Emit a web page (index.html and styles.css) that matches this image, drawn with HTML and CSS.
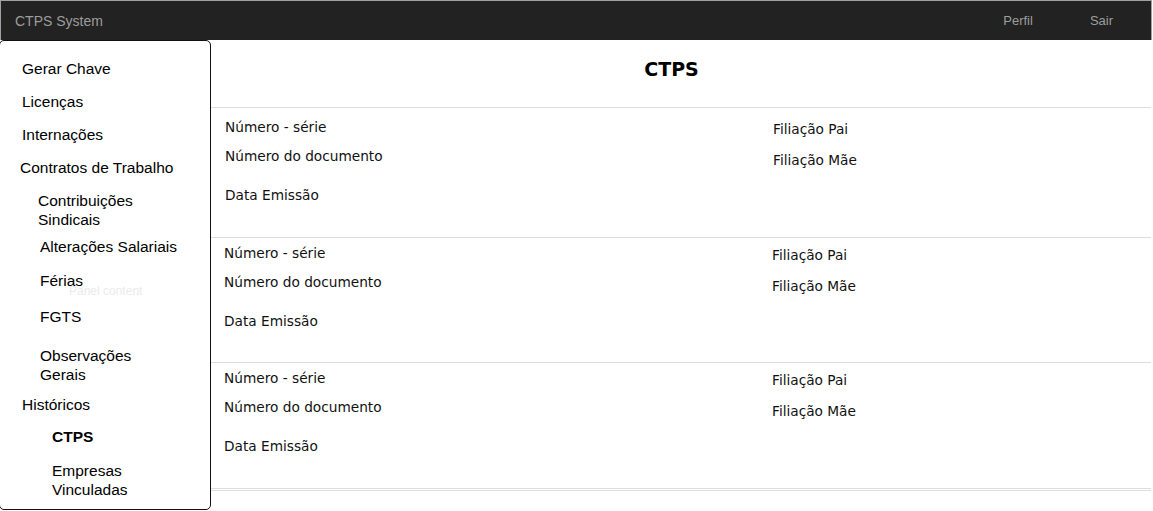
FILE: index.html
```html
<!DOCTYPE html>
<html lang="pt">
<head>
<meta charset="utf-8">
<title>CTPS System</title>
<link rel="stylesheet" href="styles.css">
</head>
<body>
<div class="app">
  <header class="navbar">
    <span class="brand">CTPS System</span>
    <nav class="nav-links">
      <span class="nav-link">Perfil</span>
      <span class="nav-link">Sair</span>
    </nav>
  </header>
  <div class="content">
    <main class="main">
      <h1 class="title">CTPS</h1>
      <section class="record record-first">
        <div class="col col-left">
          <div class="field">Número - série</div>
          <div class="field field-2">Número do documento</div>
          <div class="field field-3">Data Emissão</div>
        </div>
        <div class="col col-right">
          <div class="field">Filiação Pai</div>
          <div class="field field-r2">Filiação Mãe</div>
        </div>
      </section>
      <section class="record">
        <div class="col col-left">
          <div class="field">Número - série</div>
          <div class="field field-2">Número do documento</div>
          <div class="field field-3">Data Emissão</div>
        </div>
        <div class="col col-right">
          <div class="field">Filiação Pai</div>
          <div class="field field-r2">Filiação Mãe</div>
        </div>
      </section>
      <section class="record record-last">
        <div class="col col-left">
          <div class="field">Número - série</div>
          <div class="field field-2">Número do documento</div>
          <div class="field field-3">Data Emissão</div>
        </div>
        <div class="col col-right">
          <div class="field">Filiação Pai</div>
          <div class="field field-r2">Filiação Mãe</div>
        </div>
      </section>
      <div class="end-rule"></div>
    </main>
    <aside class="sidebar">
      <ul class="menu">
        <li class="item lvl0 first">Gerar Chave</li>
        <li class="item lvl0">Licenças</li>
        <li class="item lvl0">Internações</li>
        <li class="item lvl0 shift-left">Contratos de Trabalho</li>
        <li class="item lvl1 shift-left wrap">Contribuições Sindicais</li>
        <li class="item lvl1 gap-tight">Alterações Salariais</li>
        <li class="item lvl1 gap-15">Férias</li>
        <li class="item lvl1 gap-17">FGTS</li>
        <li class="item lvl1 gap-20 wrap">Observações Gerais</li>
        <li class="item lvl0 gap-11">Históricos</li>
        <li class="item lvl2 gap-13 active">CTPS</li>
        <li class="item lvl2 wrap gap-15">Empresas Vinculadas</li>
      </ul>
    </aside>
    <span class="panel-hint">Panel content</span>
  </div>
</div>
</body>
</html>
```

FILE: styles.css
```css
* { box-sizing: border-box; }

html, body {
  margin: 0;
  padding: 0;
  background: #fff;
}

.app {
  width: 1153px;
  height: 511px;
  overflow: hidden;
}

.navbar {
  width: 1152px;
  height: 40px;
  background: #222;
  border-top: 1px solid #a0a0a0;
  border-left: 1px solid #a0a0a0;
  border-right: 1px solid #a0a0a0;
  display: flex;
  align-items: center;
  justify-content: space-between;
  padding: 0 38px 0 14px;
  font-family: "Liberation Sans", Arial, sans-serif;
  color: #9d9d9d;
}

.brand {
  font-size: 14px;
  line-height: 20px;
}

.nav-links {
  display: flex;
  gap: 57px;
}

.nav-link {
  font-size: 13px;
  line-height: 20px;
}

.content {
  position: relative;
  width: 1151px;
}

.main {
  font-family: "DejaVu Sans", Verdana, sans-serif;
  font-size: 13.7px;
  color: #111;
}

.title {
  margin: 0;
  padding: 18px 0 27px 192px;
  font-size: 19px;
  line-height: 22px;
  font-weight: bold;
  text-align: center;
  color: #000;
  border-bottom: 1px solid #ddd;
}

.record {
  display: grid;
  grid-template-columns: 548px 1fr;
  padding: 6px 0 32px 224px;
  border-bottom: 1px solid #ddd;
}

.record-first {
  padding-top: 10px;
  padding-bottom: 33px;
  padding-left: 225px;
}

.record-last {
  padding-bottom: 33px;
}

.col-right {
  padding-top: 2px;
}

.field {
  line-height: 18px;
  height: 18px;
  white-space: nowrap;
}

.field-2 { margin-top: 11px; }
.field-3 { margin-top: 21px; }
.field-r2 { margin-top: 13px; }

.end-rule {
  margin-top: 1px;
  border-top: 1px solid #ddd;
}

.sidebar {
  position: absolute;
  top: 0;
  left: -1px;
  width: 212px;
  height: 470px;
  background: #fff;
  border: 1px solid #111;
  border-radius: 5px;
  font-family: "Liberation Sans", Arial, sans-serif;
  font-size: 15.5px;
  color: #000;
}

.menu {
  list-style: none;
  margin: 0;
  padding: 0;
}

.item {
  line-height: 19px;
  margin-top: 14px;
}

.item.first { margin-top: 18px; }

.lvl0 { padding-left: 22px; }
.lvl1 { padding-left: 40px; }
.lvl2 { padding-left: 52px; }
.lvl0.shift-left { padding-left: 20px; }
.lvl1.shift-left { padding-left: 38px; }

.wrap { width: 150px; }
.lvl2.wrap { width: 140px; }

.gap-tight { margin-top: 8px; }
.gap-11 { margin-top: 11px; }
.gap-13 { margin-top: 13px; }
.gap-15 { margin-top: 15px; }
.gap-17 { margin-top: 17px; }
.gap-20 { margin-top: 20px; }

.active { font-weight: bold; }

.panel-hint {
  position: absolute;
  left: 69px;
  top: 244px;
  font-family: "Liberation Sans", Arial, sans-serif;
  font-size: 12px;
  line-height: 14px;
  color: #ebebeb;
}
```
